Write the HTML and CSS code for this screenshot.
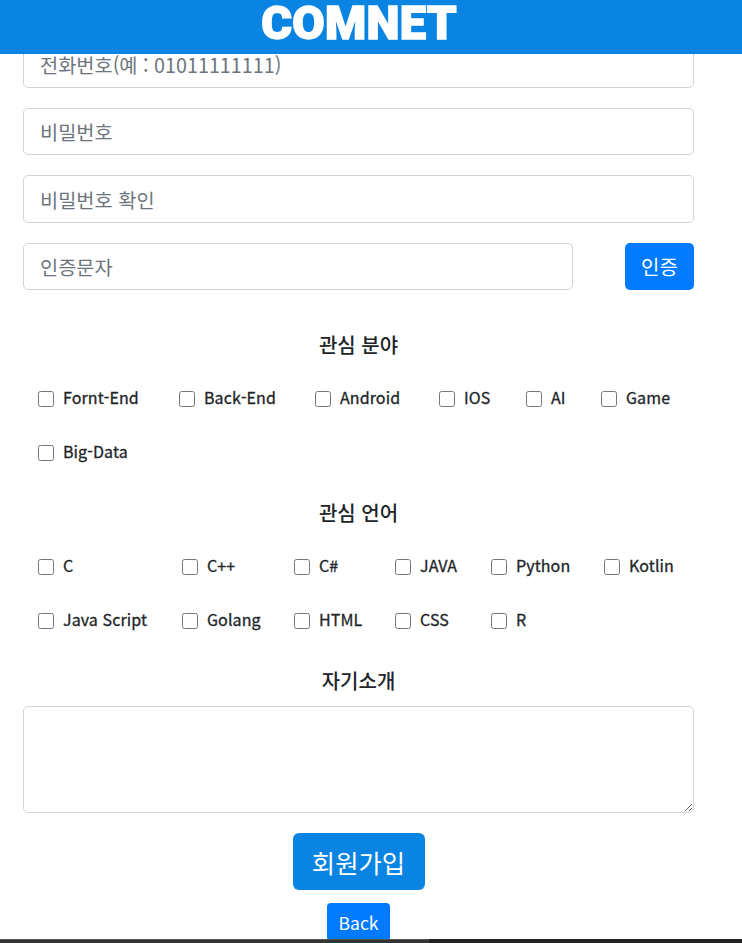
FILE: index.html
```html
<!DOCTYPE html>
<html lang="ko">
<head>
<meta charset="utf-8">
<title>COMNET</title>
<link rel="stylesheet" href="styles.css">
</head>
<body>
<header class="topbar"><h1 class="logo">COMNET</h1></header>
<main class="page">
  <form class="form">
    <input class="field" type="text" placeholder="전화번호(예 : 01011111111)">
    <input class="field" type="password" placeholder="비밀번호">
    <input class="field" type="password" placeholder="비밀번호 확인">
    <div class="verify">
      <input class="field field-verify" type="text" placeholder="인증문자">
      <button class="btn btn-verify" type="button">인증</button>
    </div>
    <h2 class="section-title title-first">관심 분야</h2>
    <div class="checks checks-field">
      <label class="check"><input type="checkbox">Fornt-End</label>
      <label class="check"><input type="checkbox">Back-End</label>
      <label class="check"><input type="checkbox">Android</label>
      <label class="check"><input type="checkbox">IOS</label>
      <label class="check"><input type="checkbox">AI</label>
      <label class="check"><input type="checkbox">Game</label>
      <label class="check"><input type="checkbox">Big-Data</label>
    </div>
    <h2 class="section-title">관심 언어</h2>
    <div class="checks checks-lang">
      <label class="check"><input type="checkbox">C</label>
      <label class="check"><input type="checkbox">C++</label>
      <label class="check"><input type="checkbox">C#</label>
      <label class="check"><input type="checkbox">JAVA</label>
      <label class="check"><input type="checkbox">Python</label>
      <label class="check"><input type="checkbox">Kotlin</label>
      <label class="check"><input type="checkbox">Java Script</label>
      <label class="check"><input type="checkbox">Golang</label>
      <label class="check"><input type="checkbox">HTML</label>
      <label class="check"><input type="checkbox">CSS</label>
      <label class="check"><input type="checkbox">R</label>
    </div>
    <h2 class="section-title">자기소개</h2>
    <textarea class="field intro"></textarea>
    <div class="actions">
      <button class="btn btn-submit" type="submit">회원가입</button>
      <button class="btn btn-back" type="button">Back</button>
    </div>
  </form>
</main>
<div class="taskbar"><span class="taskbar-left"></span><span class="taskbar-right"></span></div>
</body>
</html>
```
FILE: styles.css
```css
* { box-sizing: border-box; }
html, body { margin: 0; height: 943px; overflow: hidden; background: #fff; }
body { font-family: "Noto Sans CJK KR", "Noto Sans", sans-serif; color: #212529; font-size: 16px; }
.topbar { position: fixed; top: 0; left: 0; right: 0; height: 54px; background: #0984e3; display: flex; justify-content: center; z-index: 2; }
.logo { margin: 0 24px 0 0; font-family: "Roboto", sans-serif; font-weight: 900; font-size: 47px; line-height: 46px; color: #fff; letter-spacing: 0.3px; -webkit-text-stroke: 1.5px #fff; }
.page { padding: 40.7px 48px 0 23px; }
.form { display: flex; flex-direction: column; }
.field { display: block; width: 100%; height: 47.33px; padding: 6px 16px; font: 400 19.75px/1.5 "Noto Sans CJK KR", sans-serif; color: #495057; background: #fff; border: 1px solid #ced4da; border-radius: 5px; margin-bottom: 20px; }
.field::placeholder { color: #6c757d; opacity: 1; }
.verify { display: flex; justify-content: space-between; }
.field-verify { width: 550px; margin-bottom: 0; }
.btn { border: 0; color: #fff; font-family: "Noto Sans CJK KR", sans-serif; cursor: pointer; }
.btn-verify { width: 69px; height: 47.33px; background: #007bff; border-radius: 5px; font-size: 20px; padding: 0; }
.section-title { margin: 0; text-align: center; font-size: 20px; font-weight: 500; line-height: 27px; color: #212529; }
.title-first { margin-top: 41px; }
.checks { display: grid; grid-auto-rows: 54px; padding-left: 15px; margin: 13px 0 20px; }
.checks-field { grid-template-columns: 141px 136px 124px 87px 75px auto; }
.checks-lang { grid-template-columns: 144px 112px 101px 96px 113px auto; }
.check { display: flex; align-items: center; padding-bottom: 2px; font-size: 16px; font-weight: 400; letter-spacing: 0.1px; white-space: nowrap; color: #212529; -webkit-text-stroke: 0.3px #212529; }
.check input { width: 16px; height: 16px; margin: 4px 9px 0 0; }
.intro { height: 107px; margin: 12px 0 0; }
.actions { display: flex; flex-direction: column; align-items: center; padding-top: 20px; }
.btn-submit { width: 132px; height: 57px; background: #0984e3; border-radius: 6px; font-size: 25.4px; padding: 0; }
.btn-back { width: 63px; height: 38px; margin-top: 13px; background: #007bff; border-radius: 4px; font-size: 17.6px; padding: 0; }
.taskbar { position: fixed; left: 0; right: 0; bottom: 0; height: 4px; display: flex; z-index: 1; }
.taskbar-left { width: 429px; background: #333; border-top: 1px solid #555; }
.taskbar-right { flex: 1; background: #222; }
```
